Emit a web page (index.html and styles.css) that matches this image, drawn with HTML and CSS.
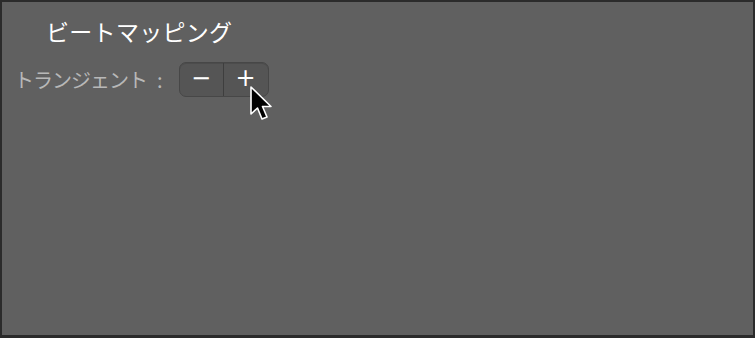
FILE: index.html
```html
<!DOCTYPE html>
<html lang="ja">
<head>
    <meta charset="UTF-8">
    <title>ビートマッピング</title>
    <link rel="stylesheet" href="styles.css">
</head>
<body>
    <div class="panel">
        <h2 class="title">ビートマッピング</h2>
        <div class="row">
            <span class="label">トランジェント<span class="colon">:</span></span>
            <div class="stepper">
                <button class="step">&minus;</button>
                <button class="step plus">+
                    <svg class="cursor" width="26" height="38" viewBox="0 0 26 38">
                        <path d="M2 1 L2 28 L8.5 22 L13 33 L18 31 L13.5 20.5 L22 20.5 Z" fill="#000" stroke="#fff" stroke-width="1.6" stroke-linejoin="round"/>
                    </svg>
                </button>
            </div>
        </div>
    </div>
</body>
</html>
```

FILE: styles.css
```css
html, body {
    margin: 0;
    padding: 0;
}
body {
    width: 755px;
    height: 338px;
    font-family: "Noto Sans CJK JP", "Noto Sans", sans-serif;
    background-color: #2a2a2a;
}
.panel {
    box-sizing: border-box;
    width: 755px;
    height: 338px;
    border: 2px solid #2b2b2b;
    border-bottom-width: 3px;
    background-color: #606060;
    padding: 11px 0 0 12px;
}
.title {
    margin: 0 0 0 32px;
    font-size: 23px;
    font-weight: normal;
    color: #ffffff;
    line-height: 36px;
    letter-spacing: 0.3px;
}
.row {
    display: flex;
    align-items: center;
    margin-top: 13px;
}
.label {
    font-size: 20px;
    letter-spacing: -1px;
    color: #b8b8b8;
    line-height: 30px;
}
.colon {
    margin-left: 10px;
}
.stepper {
    display: flex;
    margin-left: 17px;
    height: 33px;
    border: 1px solid #474747;
    border-radius: 7px;
    background-color: #555555;
    box-shadow: inset 0 1px 0 #4c4c4c;
}
.step {
    position: relative;
    width: 43px;
    height: 33px;
    padding: 0 0 2px 0;
    border: none;
    background: transparent;
    color: #ffffff;
    font-family: "DejaVu Sans", sans-serif;
    font-size: 24px;
    line-height: 31px;
}
.step.plus {
    border-left: 1px solid #3e3e3e;
    width: 45px;
}
.cursor {
    position: absolute;
    left: 25px;
    top: 23px;
}
```
